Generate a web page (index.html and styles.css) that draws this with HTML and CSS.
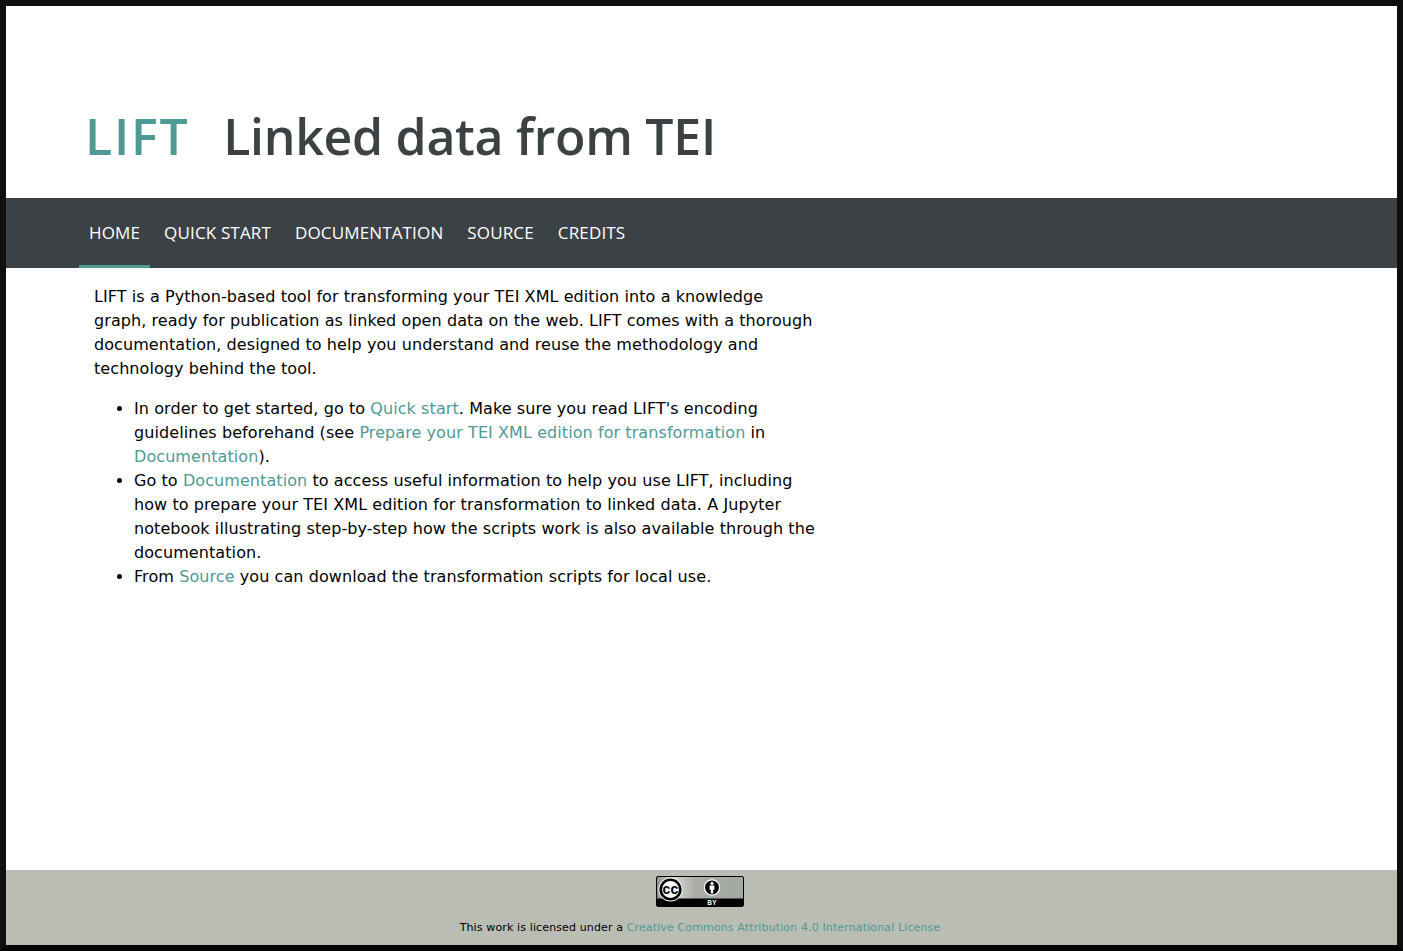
FILE: index.html
```html
<!DOCTYPE html>
<html lang="en">

<head>
    <meta charset="UTF-8" />
    <meta name="viewport" content="width=device-width, initial-scale=1.0" />
    <title>LIFT</title>
    <link rel="stylesheet" href="styles.css">
</head>

<body>
    <header class="masthead">
        <h1><span class="accent">LIFT</span> <span class="tagline">Linked data from TEI</span></h1>
    </header>

    <nav class="navbar">
        <a class="active" href="#">HOME</a>
        <a href="#">QUICK START</a>
        <a href="#">DOCUMENTATION</a>
        <a href="#">SOURCE</a>
        <a href="#">CREDITS</a>
    </nav>

    <main class="content">
        <p>LIFT is a Python-based tool for transforming your TEI XML edition into a knowledge
            graph, ready for publication as linked open data on the web. LIFT comes with a thorough
            documentation, designed to help you understand and reuse the methodology and
            technology behind the tool.</p>
        <ul>
            <li>In order to get started, go to <a href="#">Quick start</a>. Make sure you read LIFT's encoding
                guidelines beforehand (see <a href="#">Prepare your TEI XML edition for transformation</a> in
                <a href="#">Documentation</a>).</li>
            <li>Go to <a href="#">Documentation</a> to access useful information to help you use LIFT, including
                how to prepare your TEI XML edition for transformation to linked data. A Jupyter
                notebook illustrating step-by-step how the scripts work is also available through the
                documentation.</li>
            <li>From <a href="#">Source</a> you can download the transformation scripts for local use.</li>
        </ul>
    </main>

    <footer class="site-footer">
        <svg class="cc-badge" width="88" height="31" viewBox="0 0 88 31">
            <defs>
                <linearGradient id="badgefill" x1="0" x2="1" y1="0" y2="0">
                    <stop offset="0" stop-color="#8f928d" />
                    <stop offset="0.2" stop-color="#d4d6d2" />
                    <stop offset="0.45" stop-color="#a9aca6" />
                    <stop offset="1" stop-color="#a4a8a2" />
                </linearGradient>
            </defs>
            <rect x="0.5" y="0.5" width="87" height="30" rx="1.5" fill="url(#badgefill)" stroke="#000" />
            <path d="M1 22.5h86v7a1 1 0 0 1-1 1H2a1 1 0 0 1-1-1z" fill="#000" />
            <circle cx="14.5" cy="13.5" r="12" fill="#fff" />
            <circle cx="14.5" cy="13.5" r="9.8" fill="#fff" stroke="#000" stroke-width="2.6" />
            <text class="cc-letters" x="14.5" y="17.5" text-anchor="middle">cc</text>
            <circle cx="56" cy="11.5" r="8.3" fill="#fff" />
            <circle cx="56" cy="11.5" r="7" fill="#000" />
            <circle cx="56" cy="7.4" r="1.6" fill="#fff" />
            <path d="M53.6 9.6h4.8v4.2h-1.2v3.6h-2.4v-3.6h-1.2z" fill="#fff" />
            <text class="cc-by" x="56" y="29" text-anchor="middle">BY</text>
        </svg>
        <p>This work is licensed under a <a href="#">Creative Commons Attribution 4.0 International License</a></p>
    </footer>
</body>

</html>
```
FILE: styles.css
```css
* {
    box-sizing: border-box;
}

html,
body {
    height: 100%;
}

body {
    display: flex;
    flex-direction: column;
    margin: 0;
    border: 6px solid #0f0f0f;
    border-bottom-color: #000;
    background: #fff;
    color: #000;
    font-family: "DejaVu Sans", Verdana, sans-serif;
    font-size: 16px;
    letter-spacing: 0.08px;
    line-height: 24px;
}

a {
    color: #4f9a94;
    text-decoration: none;
}

.masthead {
    height: 192px;
    padding: 97px 0 0 79px;
}

.masthead h1 {
    margin: 0;
    font-family: "Open Sans", sans-serif;
    font-size: 50px;
    font-weight: 600;
    letter-spacing: -0.3px;
    line-height: 66px;
    color: #3c4144;
}

.accent {
    margin-right: 21px;
    color: #4f9a94;
    letter-spacing: 1.8px;
}

.navbar {
    display: flex;
    height: 70px;
    padding-left: 73px;
    background: #3c4145;
}

.navbar a {
    padding: 0 10px;
    border-bottom: 3px solid transparent;
    margin-right: 4px;
    color: #fff;
    font-family: "Open Sans", sans-serif;
    font-size: 17px;
    letter-spacing: 0.15px;
    line-height: 70px;
}

.navbar a.active {
    border-bottom-color: #4f9a94;
}

.content {
    flex: 1;
    width: 811px;
    padding: 17px 0 0 88px;
}

.content p {
    margin: 0 0 16px;
}

.content ul {
    margin: 0;
    padding-left: 40px;
}

.site-footer {
    height: 75px;
    padding: 6px 3px 0 0;
    background: #babdb3;
    font-size: 11px;
    letter-spacing: 0.13px;
    text-align: center;
}

.cc-badge {
    display: block;
    margin: 0 auto;
}

.site-footer p {
    margin: 13px 0 0;
    line-height: 16px;
}

.cc-letters {
    font-family: "Liberation Sans", sans-serif;
    font-size: 14px;
    font-weight: 700;
}

.cc-by {
    fill: #fff;
    font-family: "Liberation Sans", sans-serif;
    font-size: 6.5px;
    font-weight: 700;
}
```
